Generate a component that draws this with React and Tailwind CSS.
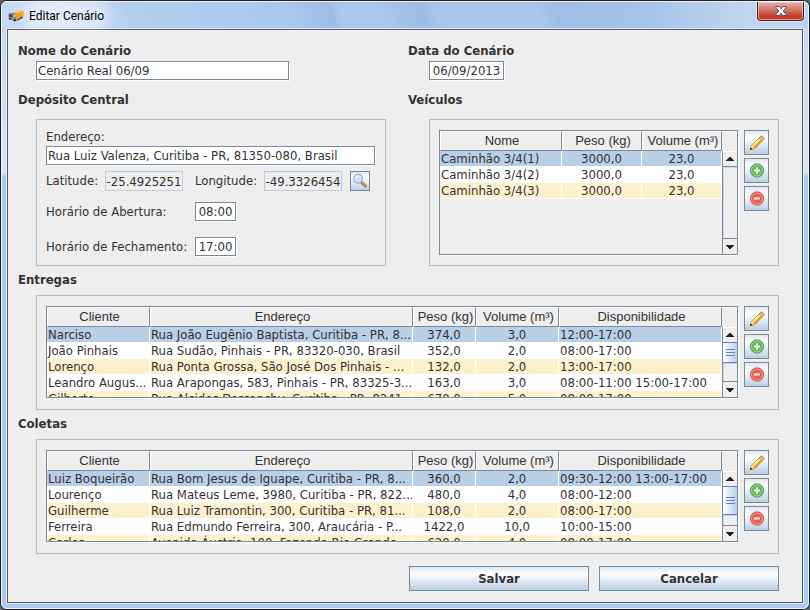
const deliveries = [
  ["Narciso", "Rua João Eugênio Baptista, Curitiba - PR, 8...", "374,0", "3,0", "12:00-17:00"],
  ["João Pinhais", "Rua Sudão, Pinhais - PR, 83320-030, Brasil", "352,0", "2,0", "08:00-17:00"],
  ["Lorenço", "Rua Ponta Grossa, São José Dos Pinhais - ...", "132,0", "2,0", "13:00-17:00"],
  ["Leandro Augus...", "Rua Arapongas, 583, Pinhais - PR, 83325-3...", "163,0", "3,0", "08:00-11:00 15:00-17:00"],
  ["Gilberto", "Rua Alcides Darcanchy, Curitiba - PR, 8241...", "670,0", "5,0", "08:00-17:00"],
];

const pickups = [
  ["Luiz Boqueirão", "Rua Bom Jesus de Iguape, Curitiba - PR, 8...", "360,0", "2,0", "09:30-12:00 13:00-17:00"],
  ["Lourenço", "Rua Mateus Leme, 3980, Curitiba - PR, 822...", "480,0", "4,0", "08:00-12:00"],
  ["Guilherme", "Rua Luiz Tramontin, 300, Curitiba - PR, 81...", "108,0", "2,0", "08:00-17:00"],
  ["Ferreira", "Rua Edmundo Ferreira, 300, Araucária - P...", "1422,0", "10,0", "10:00-15:00"],
  ["Carlos", "Avenida Áustria, 100, Fazenda Rio Grande ...", "620,0", "4,0", "08:00-17:00"],
];

const vehicles = [
  ["Caminhão 3/4(1)", "3000,0", "23,0"],
  ["Caminhão 3/4(2)", "3000,0", "23,0"],
  ["Caminhão 3/4(3)", "3000,0", "23,0"],
];

const vehicleColumns = [
  { title: "Nome", width: "w-auto" },
  { title: "Peso (kg)", width: "w-[80px]", center: true },
  { title: "Volume (m³)", width: "w-[80px]", center: true },
];

const stopColumns = [
  { title: "Cliente", width: "w-[103px]" },
  { title: "Endereço", width: "w-auto" },
  { title: "Peso (kg)", width: "w-[63px]", center: true },
  { title: "Volume (m³)", width: "w-[83px]", center: true },
  { title: "Disponibilidade", width: "w-[163px]" },
];

const metalFill = "border border-[#7a8a99] bg-linear-to-b from-[#dde8f3] via-white via-30% to-[#b8cfe5]";
const fieldStyle =
  "h-[19px] border border-[#7a8a99] bg-white px-px text-[13px] leading-4 text-[#333] shadow-[1px_1px_0_#fff] outline-none";
const coordStyle =
  "h-5 w-[78px] shrink-0 border border-[#b8cfe5] bg-[#eee] p-0 text-center text-[13px] leading-4 text-[#333] outline-none";

function TruckIcon() {
  return (
    <svg width="16" height="14" viewBox="0 0 16 14" aria-hidden="true">
      <path d="M5 3.5 12.5 1 15.5 2v5.5L9 10.5 5 8.5z" fill="#f5a11c" />
      <path d="M5 3.5 12.5 1 15.5 2 8.8 4.6z" fill="#ffcb5c" />
      <path d="M8.8 4.6 15.5 2v5.5L9 10.5z" fill="#f39a10" />
      <path d="M.5 4.5 4 3.4l4.2 1.4v5.4L5 12 .5 9.8z" fill="#8b8f94" />
      <path d="m1 5 3.6 1.2v2.4L1 7.5z" fill="#3d4349" />
      <path d="m5.2 6.2 2.4-1v2.3l-2.4 1z" fill="#c4c9ce" />
      <path d="m8.5 10.6 6.5-3v1.2L8.8 12z" fill="#4b4b4b" />
      <circle cx="6.8" cy="11.2" r="1.3" fill="#2f3235" />
      <circle cx="2" cy="9.8" r="1" fill="#2f3235" />
      <circle cx="13.3" cy="8.7" r="1" fill="#2f3235" />
    </svg>
  );
}

function CloseIcon() {
  return (
    <svg width="12" height="12" viewBox="0 0 12 12" aria-hidden="true">
      <path
        d="M1 1.5h3.2L6 3.7l1.8-2.2H11v1.2L8.2 6 11 9.3v1.2H7.8L6 8.3l-1.8 2.2H1V9.3L3.8 6 1 2.7z"
        fill="#f4f4f6"
        stroke="#55566b"
        strokeWidth="1"
        strokeLinejoin="round"
      />
    </svg>
  );
}

function MagnifierIcon() {
  return (
    <svg width="16" height="16" viewBox="0 0 16 16" aria-hidden="true">
      <path d="m9.8 9.6 3.6 3.4" stroke="#a8693a" strokeWidth="3" strokeLinecap="round" />
      <path d="m10.4 9.6 2.9 2.8" stroke="#e6a468" strokeWidth="1.2" strokeLinecap="round" />
      <circle cx="6.2" cy="5.8" r="4.4" fill="#cfe3f8" stroke="#86aede" strokeWidth="1.3" />
      <path d="M3.4 5.8a2.9 2.9 0 0 1 2.9-2.9" stroke="#fff" strokeWidth="1.2" fill="none" strokeLinecap="round" />
    </svg>
  );
}

function PencilIcon() {
  return (
    <svg width="16" height="16" viewBox="0 0 16 16" aria-hidden="true">
      <path d="M1.2 14.8 2.3 10.6 11 2l3.2 3L5.4 13.7z" fill="#fbd65c" stroke="#b9772a" strokeWidth="1" strokeLinejoin="round" />
      <path d="M3.4 10.6 11 3.2" stroke="#fff2ae" strokeWidth="1.1" />
      <path d="M5.2 12.6 12.8 5" stroke="#e59a2d" strokeWidth="1.2" />
      <path d="M10 2.9 11.6 1.3q.9-.8 1.8 0l1.3 1.3q.8.9 0 1.8L13.1 6z" fill="#f4b27d" stroke="#b9772a" strokeWidth=".9" />
      <path d="m9.6 3.4 3 2.9" stroke="#d9d9d9" strokeWidth="1" />
      <path d="m1.8 12.3 1.8 1.8-2.6 1z" fill="#3b2a1a" />
      <path d="m2.3 10.8 2.8 2.8-1.6.5-1.7-1.7z" fill="#f5dcb0" />
    </svg>
  );
}

function AddIcon() {
  return (
    <svg width="16" height="16" viewBox="0 0 16 16" aria-hidden="true">
      <circle cx="8" cy="7.5" r="6.7" fill="#4fa046" stroke="#4c9a45" strokeWidth=".8" />
      <circle cx="8" cy="7.5" r="5.6" fill="#69b95c" stroke="#a9dba0" strokeWidth=".9" />
      <path d="M8 4.5v6M5 7.5h6" stroke="#fff" strokeWidth="2" />
    </svg>
  );
}

function RemoveIcon() {
  return (
    <svg width="16" height="16" viewBox="0 0 16 16" aria-hidden="true">
      <circle cx="8" cy="7.5" r="6.7" fill="#dc4a42" stroke="#d34640" strokeWidth=".8" />
      <circle cx="8" cy="7.5" r="5.6" fill="#ec5f54" stroke="#f8aaa2" strokeWidth=".9" />
      <path d="M5 7.5h6" stroke="#fff" strokeWidth="2" />
    </svg>
  );
}

function IconButton({ label, children }) {
  return (
    <button type="button" aria-label={label} className={`flex size-[25px] items-center justify-center ${metalFill}`}>
      {children}
    </button>
  );
}

function EditButtons({ name }) {
  return (
    <div className="flex flex-col gap-[3px]">
      <IconButton label={`Editar ${name}`}><PencilIcon /></IconButton>
      <IconButton label={`Adicionar ${name}`}><AddIcon /></IconButton>
      <IconButton label={`Remover ${name}`}><RemoveIcon /></IconButton>
    </div>
  );
}

function ScrollBar({ thumb }) {
  return (
    <div className="flex w-[15px] shrink-0 flex-col">
      <div className="h-5 border-t border-white" />
      <div className="flex min-h-0 flex-1 flex-col border-l border-[#7a8a99]">
        <button
          type="button"
          aria-label="Rolar para cima"
          className="flex h-4 shrink-0 items-center justify-center border-t border-b border-t-white border-b-[#7a8a99]"
        >
          <svg width="8" height="4" viewBox="0 0 8 4" shapeRendering="crispEdges" aria-hidden="true">
            <path d="M3 0h2v1h1v1h1v1h1v1H0V3h1V2h1V1h1z" fill="#222" />
          </svg>
        </button>
        {thumb && (
          <div
            className={`-mt-px -ml-px flex shrink-0 flex-col items-center justify-center gap-[2px] border border-r-0 border-[#6382bf] bg-linear-to-r from-white via-[#dce9f7] to-[#b8cfe5] ${thumb}`}
          >
            <span className="h-px w-[9px] bg-[#6382bf]" />
            <span className="h-px w-[9px] bg-[#6382bf]" />
            <span className="h-px w-[9px] bg-[#6382bf]" />
          </div>
        )}
        <div className="flex-1 border-t border-l border-[#ccd3e6]" />
        <button
          type="button"
          aria-label="Rolar para baixo"
          className="flex h-4 shrink-0 items-center justify-center border-t border-[#7a8a99]"
        >
          <svg width="8" height="4" viewBox="0 0 8 4" shapeRendering="crispEdges" aria-hidden="true">
            <path d="M0 0h8v1H7v1H6v1H5v1H3V3H2V2H1V1H0z" fill="#222" />
          </svg>
        </button>
      </div>
    </div>
  );
}

function rowFill(index) {
  if (index === 0) return "bg-[#b8cfe5]";
  return index % 2 === 0 ? "bg-[#fdf0cd]" : "bg-white";
}

function DataTable({ columns, rows, height, thumb, label }) {
  return (
    <div className={`flex min-w-0 flex-1 overflow-hidden border border-[#7a8a99] shadow-[1px_1px_0_#fff] ${height}`}>
      <div className="min-w-0 flex-1 overflow-hidden">
        <table aria-label={label} className="w-full table-fixed border-separate border-spacing-0 text-[13px] text-[#333]">
          <thead>
            <tr>
              {columns.map((c) => (
                <th
                  key={c.title}
                  scope="col"
                  className={`h-5 border-t border-r border-b border-l border-t-white border-r-[#7a8a99] border-b-[#7a8a99] border-l-white py-0 pr-0 pl-[2px] text-center font-['Liberation_Sans',sans-serif] leading-[18px] font-normal whitespace-nowrap ${c.width}`}
                >
                  {c.title}
                </th>
              ))}
            </tr>
          </thead>
          <tbody>
            {rows.map((row, i) => (
              <tr key={row[0]} className={rowFill(i)}>
                {row.map((value, j) => (
                  <td
                    key={columns[j].title}
                    className={`h-4 overflow-hidden border-r border-b border-white p-0 leading-[15px] whitespace-nowrap ${columns[j].center ? "text-center" : "pl-px"}`}
                  >
                    {value}
                  </td>
                ))}
              </tr>
            ))}
          </tbody>
        </table>
      </div>
      <ScrollBar thumb={thumb} />
    </div>
  );
}

function Heading({ children }) {
  return <h2 className="h-5 text-[13px] leading-5 font-bold">{children}</h2>;
}

export default function App() {
  return (
    <div className="min-h-screen bg-[#5a6068] font-['DejaVu_Sans_Condensed','DejaVu_Sans',sans-serif] text-[13px] text-[#333]">
      <div className="rounded-[7px] border border-[#1c1f26] bg-[#a9c8ee]">
        <div className="rounded-md border border-[#eef5fd] bg-linear-to-b from-[#c2d6ef] from-0% via-[#d9e6f7] via-28% to-[#a9c9f0] to-29% px-1 pb-1">
          <header className="-mx-1 flex h-[26px] items-start justify-between rounded-t-[5px] bg-[linear-gradient(75deg,#c6d9f1_0%,#d3e2f5_8%,#b4cfee_16%,#a9c8ee_36%,#9dbbe3_41%,#abc8ec_42%,#abc8ec_47%,#9cbbe3_52%,#a9c6ea_54%,#aac7eb_66%,#9ebde4_69%,#a5c4e9_80%,#c1d5ee_92%,#bfd4ef_100%)] pr-1 pl-[6px]">
            <div className="flex h-full items-center gap-[5px] pt-[2px] font-['Roboto','Open_Sans',sans-serif] text-xs text-black">
              <TruckIcon />
              <h1 className="rounded-full bg-white/40 shadow-[0_0_8px_6px_rgba(255,255,255,0.4)]">Editar Cenário</h1>
            </div>
            <button
              type="button"
              aria-label="Fechar"
              className="flex h-[19px] w-[47px] items-center justify-center rounded-b-[4px] border border-t-0 border-[#4f1d20] bg-linear-to-b from-[#e5b3a8] from-0% via-[#cf7668] via-45% to-[#c4402b] to-75% shadow-[inset_0_0_0_1px_rgba(255,220,210,0.55),0_0_0_1px_rgba(255,255,255,0.5)]"
            >
              <CloseIcon />
            </button>
          </header>

          <div className="border border-[#e3eefb]">
            <main className="border border-[#4e5b6b] bg-[#eee] pt-[11px] pr-[23px] pb-[11px] pl-[10px]">
              <div className="grid grid-cols-[368fr_371fr] gap-x-[22px]">
                <div>
                  <label htmlFor="scenario-name" className="block h-5 leading-5 font-bold">Nome do Cenário</label>
                  <div className="flex pl-[18px]">
                    <input id="scenario-name" defaultValue="Cenário Real 06/09" className={`w-[253px] ${fieldStyle}`} />
                  </div>
                </div>
                <div>
                  <label htmlFor="scenario-date" className="block h-5 leading-5 font-bold">Data do Cenário</label>
                  <div className="flex pl-[21px]">
                    <input id="scenario-date" defaultValue="06/09/2013" className={`w-[75px] text-center ${fieldStyle}`} />
                  </div>
                </div>

                <section className="mt-[10px]">
                  <Heading>Depósito Central</Heading>
                  <div className="mt-[9px] ml-[18px] border border-[#bababa] px-[9px] pt-2 pb-[9px]">
                    <label htmlFor="address" className="block h-[18px] leading-[18px]">Endereço:</label>
                    <div className="flex pr-px">
                      <input id="address" defaultValue="Rua Luiz Valenza, Curitiba - PR, 81350-080, Brasil" className={`w-full ${fieldStyle}`} />
                    </div>
                    <div className="mt-[6px] flex items-center">
                      <label htmlFor="latitude" className="w-[59px] shrink-0">Latitude:</label>
                      <input id="latitude" readOnly defaultValue="-25.4925251" className={coordStyle} />
                      <label htmlFor="longitude" className="ml-3 w-[69px] shrink-0">Longitude:</label>
                      <input id="longitude" readOnly defaultValue="-49.3326454" className={coordStyle} />
                      <button type="button" aria-label="Buscar endereço" className={`ml-2 flex size-5 shrink-0 items-center justify-center ${metalFill}`}>
                        <MagnifierIcon />
                      </button>
                    </div>
                    <div className="mt-[11px] flex items-center">
                      <label htmlFor="opening" className="w-[149px]">Horário de Abertura:</label>
                      <input id="opening" defaultValue="08:00" className={`w-[41px] text-center ${fieldStyle}`} />
                    </div>
                    <div className="mt-[15px] flex items-center">
                      <label htmlFor="closing" className="w-[149px]">Horário de Fechamento:</label>
                      <input id="closing" defaultValue="17:00" className={`w-[41px] text-center ${fieldStyle}`} />
                    </div>
                  </div>
                </section>

                <section className="mt-[10px] flex flex-col">
                  <Heading>Veículos</Heading>
                  <div className="mt-[9px] ml-[21px] flex flex-1 gap-[6px] border border-[#bababa] py-[10px] pr-[9px] pl-[9px]">
                    <DataTable label="Veículos" columns={vehicleColumns} rows={vehicles} height="h-[125px]" />
                    <EditButtons name="veículo" />
                  </div>
                </section>
              </div>

              <section className="mt-1">
                <Heading>Entregas</Heading>
                <div className="mt-[5px] ml-[18px] flex gap-[6px] border border-[#bababa] px-[9px] pt-[10px] pb-[11px]">
                  <DataTable label="Entregas" columns={stopColumns} rows={deliveries} height="h-[92px]" thumb="h-[21px]" />
                  <EditButtons name="entrega" />
                </div>
              </section>

              <section className="mt-1">
                <Heading>Coletas</Heading>
                <div className="mt-[5px] ml-[18px] flex gap-[6px] border border-[#bababa] px-[9px] pt-[10px] pb-[11px]">
                  <DataTable label="Coletas" columns={stopColumns} rows={pickups} height="h-[92px]" thumb="h-[29px]" />
                  <EditButtons name="coleta" />
                </div>
              </section>

              <div className="mt-3 flex justify-end gap-[10px]">
                <button type="button" className={`h-[25px] w-[180px] leading-4 font-bold ${metalFill}`}>Salvar</button>
                <button type="button" className={`h-[25px] w-[180px] leading-4 font-bold ${metalFill}`}>Cancelar</button>
              </div>
            </main>
          </div>
        </div>
      </div>
    </div>
  );
}
